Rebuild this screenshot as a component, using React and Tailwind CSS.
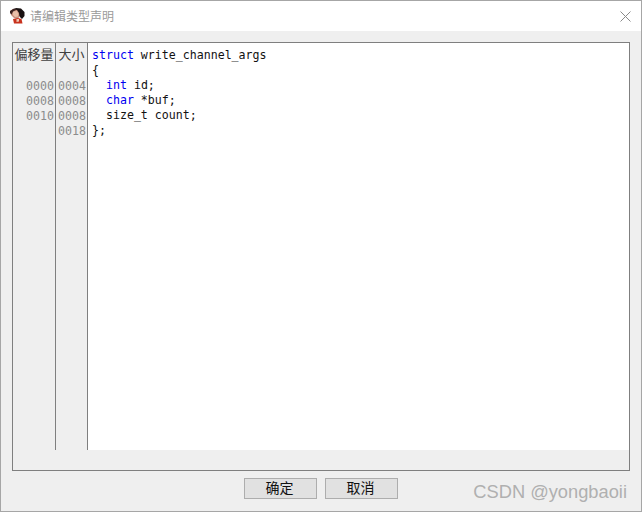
const offsets = ['0000', '0008', '0010', '']
const sizes = ['0004', '0008', '0008', '0018']

const mono = "font-['DejaVu_Sans_Mono','Liberation_Mono',monospace]"
const cjk = "font-['Noto_Sans_CJK_SC','Liberation_Sans',sans-serif]"

function Avatar() {
  return (
    <svg width="16" height="16" viewBox="0 0 16 16" className="shrink-0">
      <path d="M3 2 L7 0 L12 0.5 L15.5 4 L15.5 8 L13 11 L10 8 L9 4 L5 4 Z" fill="#1a1212" />
      <path d="M1 3 L4 1 L8 2 L10 5 L10.5 9 L8 11 L5 10 L2 7 Z" fill="#c98f7c" />
      <path d="M4 3.5 L8 3 L9.5 6 L9 8.5 L6 9 L4 7 Z" fill="#e9bfa8" />
      <path d="M1 3 L5 0.5 L8 1.5 L4 3.5 L2.5 6.5 L1 5 Z" fill="#3a2220" />
      <path d="M4 11 L9 10 L12.5 11 L13.5 15.5 L5 15.5 Z" fill="#c8321e" />
      <path d="M7.5 11 L10 11 L10 13.5 L7.5 14 Z" fill="#efc9b4" />
    </svg>
  )
}

function GutterColumn({ title, rows, width }) {
  return (
    <div className={`${width} shrink-0 border-r border-[#7f7f7f] flex flex-col`}>
      <div className={`${cjk} h-[36px] pt-[2px] text-[13px] leading-[17px] text-[#404040] text-center whitespace-nowrap`}>{title}</div>
      {rows.map((r, i) => (
        <div key={i} className={`${mono} h-[15px] pr-px text-[11.6px] leading-[15px] text-[#8c8c8c] text-right`}>{r}</div>
      ))}
    </div>
  )
}

function DialogButton({ children }) {
  return (
    <button className={`${cjk} w-[73px] h-[21px] pr-[2px] pb-[2px] bg-[#e1e1e1] border border-[#adadad] text-[14px] leading-[17px] text-[#111]`}>
      {children}
    </button>
  )
}

export default function App() {
  return (
    <div className="w-[642px] h-[512px] flex flex-col bg-[#efefef] border border-[#a6a6a6]">
      {/* Title bar */}
      <div className="h-[30px] shrink-0 bg-white flex items-center pl-[8px] pr-[10px]">
        <Avatar />
        <span className={`${cjk} ml-[5px] text-[12px] text-[#9a9a9a]`}>请编辑类型声明</span>
        <svg width="11" height="11" viewBox="0 0 11 11" className="ml-auto" stroke="#8a8a8a" strokeWidth="1" fill="none">
          <path d="M0.5 0.5 L10.5 10.5 M10.5 0.5 L0.5 10.5" />
        </svg>
      </div>

      {/* Editor frame */}
      <div className="mt-[11px] mx-[11px] h-[429px] border border-[#7f7f7f] flex flex-col">
        <div className="h-[407px] flex">
          <GutterColumn title="偏移量" rows={offsets} width="w-[43px]" />
          <GutterColumn title="大小" rows={sizes} width="w-[32px]" />
          <div className={`${mono} flex-1 bg-white pl-[4px] pt-[5px] text-[11.6px] leading-[15px] text-[#111] whitespace-pre`}>
            <div><span className="text-[#0000f0]">struct</span> write_channel_args</div>
            <div>{'{'}</div>
            <div>  <span className="text-[#0000f0]">int</span> id;</div>
            <div>  <span className="text-[#0000f0]">char</span> *buf;</div>
            <div>  size_t count;</div>
            <div>{'};'}</div>
          </div>
        </div>
      </div>

      {/* Buttons */}
      <div className="relative mt-[7px] flex justify-center gap-[8px]">
        <DialogButton>确定</DialogButton>
        <DialogButton>取消</DialogButton>
        <span className="absolute right-[14px] top-[3px] font-['Liberation_Sans',sans-serif] text-[18.3px] leading-[22px] text-[#b0b0b0] whitespace-nowrap">CSDN @yongbaoii</span>
      </div>
    </div>
  )
}
